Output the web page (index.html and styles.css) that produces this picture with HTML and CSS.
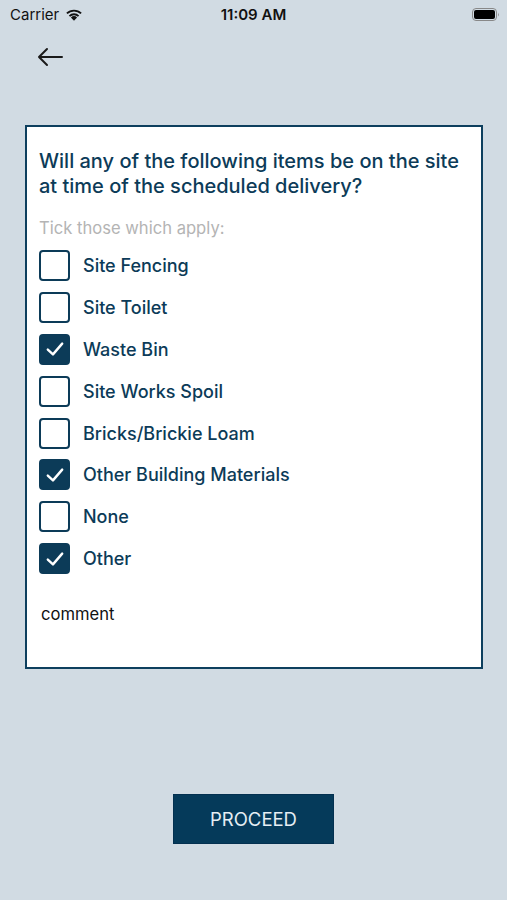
FILE: index.html
```html
<!DOCTYPE html>
<html>
<head>
<meta charset="utf-8">
<link rel="stylesheet" href="styles.css">
</head>
<body>
<div class="screen">
  <div class="status">
    <div class="status-left">
      <span class="carrier">Carrier</span>
      <svg class="wifi" width="18" height="13" viewBox="0 0 17 12"><path d="M8.5 12 L5.6 8.9 A4.2 4.2 0 0 1 11.4 8.9 Z" fill="#111"/><path d="M3.6 6.9 A7 7 0 0 1 13.4 6.9 L12.2 8.1 A5.3 5.3 0 0 0 4.8 8.1 Z" fill="#111"/><path d="M1.2 4.4 A10.5 10.5 0 0 1 15.8 4.4 L14.6 5.6 A8.8 8.8 0 0 0 2.4 5.6 Z" fill="#111"/></svg>
    </div>
    <div class="time">11:09 AM</div>
    <div class="status-right">
      <svg width="28" height="13" viewBox="0 0 28 13"><rect x="0.5" y="0.5" width="24" height="12" rx="3.5" fill="none" stroke="#888" stroke-width="1"/><rect x="2" y="2" width="21" height="9" rx="2" fill="#000"/><path d="M26 4.5 Q27.5 6.5 26 8.5 Z" fill="#888"/></svg>
    </div>
  </div>
  <div class="nav">
    <svg class="back" width="28" height="20" viewBox="0 0 28 20"><path d="M26 10 H3 M11 2 L3 10 L11 18" fill="none" stroke="#1a1a1a" stroke-width="2" stroke-linecap="round" stroke-linejoin="round"/></svg>
  </div>
  <div class="card">
    <h1 class="question">Will any of the following items be on the site at time of the scheduled delivery?</h1>
    <p class="hint">Tick those which apply:</p>
    <ul class="options">
      <li class="option"><span class="box"></span><span class="label">Site Fencing</span></li>
      <li class="option"><span class="box"></span><span class="label">Site Toilet</span></li>
      <li class="option"><span class="box checked"><svg viewBox="0 0 20 20"><path d="M4 10.5 L8.3 14.5 L16 5.5" fill="none" stroke="#fff" stroke-width="2" stroke-linecap="round" stroke-linejoin="round"/></svg></span><span class="label">Waste Bin</span></li>
      <li class="option"><span class="box"></span><span class="label">Site Works Spoil</span></li>
      <li class="option"><span class="box"></span><span class="label">Bricks/Brickie Loam</span></li>
      <li class="option"><span class="box checked"><svg viewBox="0 0 20 20"><path d="M4 10.5 L8.3 14.5 L16 5.5" fill="none" stroke="#fff" stroke-width="2" stroke-linecap="round" stroke-linejoin="round"/></svg></span><span class="label">Other Building Materials</span></li>
      <li class="option"><span class="box"></span><span class="label">None</span></li>
      <li class="option"><span class="box checked"><svg viewBox="0 0 20 20"><path d="M4 10.5 L8.3 14.5 L16 5.5" fill="none" stroke="#fff" stroke-width="2" stroke-linecap="round" stroke-linejoin="round"/></svg></span><span class="label">Other</span></li>
    </ul>
    <div class="comment">comment</div>
  </div>
  <div class="actions">
    <button class="proceed">PROCEED</button>
  </div>
</div>
</body>
</html>
```

FILE: styles.css
```css
* { box-sizing: border-box; }
html, body { margin: 0; padding: 0; }
body {
  width: 507px;
  height: 900px;
  background: #d1dbe3;
  font-family: Inter, "Noto Sans", sans-serif;
  overflow: hidden;
}
.screen { display: flex; flex-direction: column; height: 900px; }
.status {
  height: 28px;
  display: flex;
  align-items: center;
  justify-content: space-between;
  padding: 0 7px 0 10px;
  position: relative;
}
.status-left { display: flex; align-items: center; gap: 6px; }
.carrier { font-size: 15px; color: #111; }
.time {
  position: absolute;
  left: 0; right: 0;
  text-align: center;
  font-size: 15px;
  font-weight: 600;
  color: #111;
}
.status-right { display: flex; align-items: center; }
.nav { height: 56px; padding: 0 0 0 36px; display: flex; align-items: center; }
.back { display: block; margin-top: 1px; }
.card {
  margin: 41px 24px 0 25px;
  height: 544px;
  background: #fff;
  border: 2px solid #0d3f5e;
  padding: 22px 16px 0 12px;
}
.question {
  margin: 0;
  font-size: 20px;
  line-height: 25px;
  font-weight: 500;
  color: #0c3b58;
  letter-spacing: 0;
}
.hint {
  margin: 19px 0 0 0;
  font-size: 16.6px;
  line-height: 20px;
  color: #b4b4b4;
}
.options { list-style: none; margin: 6.5px 0 0 0; padding: 0; }
.option {
  display: flex;
  align-items: center;
  height: 41.9px;
}
.box {
  width: 31px;
  height: 31px;
  border: 2.5px solid #0c3b58;
  border-radius: 4px;
  flex: none;
  display: flex;
  align-items: center;
  justify-content: center;
}
.box.checked { background: #0c3b58; }
.box svg { width: 24px; height: 24px; }
.label {
  margin-left: 13px;
  font-size: 18px;
  font-weight: 500;
  color: #0c3b58;
}
.comment {
  margin: 24.5px 0 0 2px;
  font-size: 16.6px;
  color: #111;
}
.actions { display: flex; justify-content: center; margin-top: 125px; }
.proceed {
  width: 161px;
  height: 50px;
  background: #053a5a;
  border: 1px solid #033050;
  color: #e6eef4;
  font-family: Inter, "Noto Sans", sans-serif;
  font-size: 18.5px;
  padding: 0;
}
```
